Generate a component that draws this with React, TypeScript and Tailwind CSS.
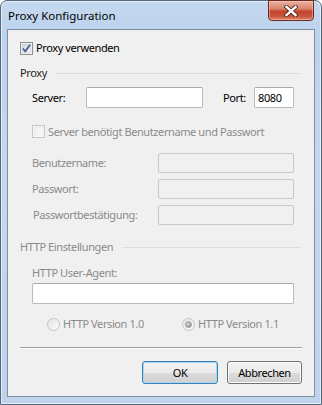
import React from "react";

function CheckBox({ checked, disabled }: { checked?: boolean; disabled?: boolean }) {
  return (
    <svg width="13" height="13" viewBox="0 0 13 13" className="shrink-0">
      <defs>
        <linearGradient id={disabled ? "cbd" : "cbe"} x1="0" y1="0" x2="1" y2="1">
          <stop offset="0" stopColor={disabled ? "#ececec" : "#cfd3d7"} />
          <stop offset="1" stopColor={disabled ? "#fbfbfb" : "#fbfbfb"} />
        </linearGradient>
      </defs>
      <rect x="0.5" y="0.5" width="12" height="12" fill="#fff" stroke={disabled ? "#c6c6c6" : "#8e8f8f"} />
      <rect x="2" y="2" width="9" height="9" fill={`url(#${disabled ? "cbd" : "cbe"})`} stroke={disabled ? "#e0e0e0" : "#c0c4c8"} strokeWidth="0.6" />
      {checked && (
        <path d="M3 6.5 L5.3 9.5 L10 2.8" fill="none" stroke="#4a5f97" strokeWidth="1.8" strokeLinejoin="round" />
      )}
    </svg>
  );
}

function Radio({ checked, id }: { checked?: boolean; id: string }) {
  return (
    <svg width="13" height="13" viewBox="0 0 13 13" className="shrink-0">
      <defs>
        <linearGradient id={id} x1="0" y1="0" x2="1" y2="1">
          <stop offset="0" stopColor="#e4e4e4" />
          <stop offset="1" stopColor="#fcfcfc" />
        </linearGradient>
        <radialGradient id={id + "d"} cx="0.4" cy="0.4" r="0.7">
          <stop offset="0" stopColor="#d8d8d8" />
          <stop offset="1" stopColor="#8c8c8c" />
        </radialGradient>
      </defs>
      <circle cx="6.5" cy="6.5" r="6" fill={`url(#${id})`} stroke="#c2c2c2" />
      {checked && <circle cx="6.5" cy="6.5" r="3" fill={`url(#${id}d)`} stroke="#8a8a8a" strokeWidth="0.6" />}
    </svg>
  );
}

function Input({ w, disabled, value }: { w: string; disabled?: boolean; value?: string }) {
  return (
    <div
      className={`${w} h-full rounded-[2px] border ${
        disabled ? "border-[#c9c9c9] bg-[#f0f0f0]" : "border-[#b7babf] border-t-[#a6a9ae] bg-white"
      } flex items-center pl-[3px] text-black`}
    >
      {value}
    </div>
  );
}

export default function App() {
  return (
    <div
      className="w-[322px] h-[405px] bg-white text-[11px] leading-[16px] tracking-[-0.4px] text-black whitespace-nowrap"
      style={{ fontFamily: '"Noto Sans", "Open Sans", sans-serif' }}
    >
      <div className="relative flex h-full w-full flex-col rounded-t-[7px] border border-[#56687e] bg-[linear-gradient(180deg,#c5d9ef_0%,#bcd3ec_8%,#c3d8ee_40%,#bfd4ec_100%)] px-[6px] pb-[7px] shadow-[inset_0_0_0_1px_rgba(255,255,255,0.55)]">
        {/* Title bar */}
        <div className="h-[28px] pl-[1px] pt-[7px]">
          <span className="text-[11.5px] leading-[16px] tracking-normal text-black">Proxy Konfiguration</span>
        </div>
        {/* Close button */}
        <div className="absolute top-[-1px] right-[7px] flex h-[21px] w-[46px] items-center justify-center rounded-b-[4px] border border-[#6d2a21] bg-[linear-gradient(180deg,#e9b0a4_0%,#d9866f_40%,#c2452c_55%,#c9533b_80%,#d98a6f_100%)] shadow-[inset_0_0_0_1px_rgba(255,210,200,0.45)]">
          <svg width="14" height="12" viewBox="0 0 14 12">
            <path d="M2.5 2 L11.5 10 M11.5 2 L2.5 10" stroke="#4a2018" strokeWidth="4.2" strokeLinecap="square" />
            <path d="M2.5 2 L11.5 10 M11.5 2 L2.5 10" stroke="#ffffff" strokeWidth="2.4" strokeLinecap="square" />
          </svg>
        </div>

        {/* Client area */}
        <div className="flex flex-1 flex-col border border-[#7f8fa3] bg-[#f0f0f0]">
          {/* Proxy verwenden */}
          <div className="mt-[11px] flex h-[14px] items-center pl-[12px]">
            <CheckBox checked />
            <span className="ml-[3px]">Proxy verwenden</span>
          </div>

          {/* Proxy header */}
          <div className="mt-[10px] flex h-[16px] items-center pl-[12px] pr-[13px]">
            <span className="text-[#1e1e1e]">Proxy</span>
            <div className="ml-[9px] h-px flex-1 bg-[#d5dfe5]" />
          </div>

          {/* Server row */}
          <div className="mt-[6px] flex h-[21px] items-center pl-[24px] pr-[20px]">
            <span className="w-[54px]">Server:</span>
            <Input w="w-[117px]" />
            <span className="ml-[20px] w-[31px]">Port:</span>
            <Input w="w-[40px]" value="8080" />
          </div>

          {/* disabled checkbox */}
          <div className="mt-[17px] flex h-[13px] items-center pl-[24px]">
            <CheckBox disabled />
            <span className="ml-[3px] text-[#8b8b8b]">Server benötigt Benutzername und Passwort</span>
          </div>

          {/* credentials */}
          <div className="mt-[15px] flex h-[20px] items-center pl-[24px] pr-[20px] text-[#8b8b8b]">
            <span className="w-[126px]">Benutzername:</span>
            <Input w="w-[136px]" disabled />
          </div>
          <div className="mt-[6px] flex h-[20px] items-center pl-[24px] pr-[20px] text-[#8b8b8b]">
            <span className="w-[126px]">Passwort:</span>
            <Input w="w-[136px]" disabled />
          </div>
          <div className="mt-[6px] flex h-[20px] items-center pl-[24px] pr-[20px] text-[#8b8b8b]">
            <span className="w-[126px] pl-[1px]">Passwortbestätigung:</span>
            <Input w="w-[136px]" disabled />
          </div>

          {/* HTTP header */}
          <div className="mt-[14px] flex h-[16px] items-center pl-[12px] pr-[13px]">
            <span className="text-[#8b8b8b]">HTTP Einstellungen</span>
            <div className="ml-[9px] h-px flex-1 bg-[#d5dfe5]" />
          </div>

          <div className="mt-[10px] flex h-[16px] items-center pl-[24px] text-[#8b8b8b]">HTTP User-Agent:</div>
          <div className="mt-[2px] flex h-[21px] pl-[24px] pr-[20px]">
            <Input w="w-[262px]" />
          </div>

          {/* radios */}
          <div className="mt-[13px] flex h-[14px] items-center text-[#8b8b8b]">
            <div className="ml-[39px] flex w-[135px] items-center">
              <Radio id="r1" />
              <span className="ml-[3px]">HTTP Version 1.0</span>
            </div>
            <div className="flex items-center">
              <Radio id="r2" checked />
              <span className="ml-[3px]">HTTP Version 1.1</span>
            </div>
          </div>

          {/* separator */}
          <div className="mx-[12px] mt-[16px] h-px bg-[#a0a0a0]" />
          <div className="mx-[12px] h-px bg-white" />

          {/* buttons */}
          <div className="mt-[12px] flex justify-end gap-[9px] pr-[12px]">
            <div className="flex h-[23px] w-[76px] items-center justify-center rounded-[3px] border border-[#3c7fb1] bg-[linear-gradient(180deg,#f2f2f2_0%,#ebebeb_50%,#dddddd_50%,#cfcfcf_100%)] shadow-[inset_0_0_0_1px_#a6d8f5]">
              OK
            </div>
            <div className="flex h-[23px] w-[75px] items-center justify-center rounded-[3px] border border-[#707070] bg-[linear-gradient(180deg,#f2f2f2_0%,#ebebeb_50%,#dddddd_50%,#cfcfcf_100%)] shadow-[inset_0_0_0_1px_#fcfcfc]">
              Abbrechen
            </div>
          </div>
        </div>
      </div>
    </div>
  );
}
